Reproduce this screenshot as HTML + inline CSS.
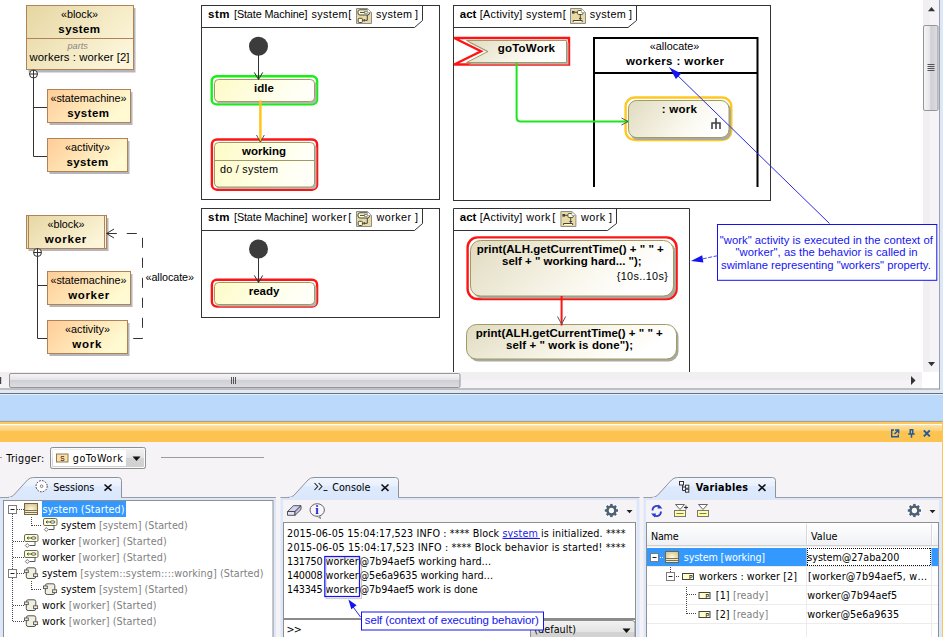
<!DOCTYPE html>
<html>
<head>
<meta charset="utf-8">
<title>Simulation</title>
<style>
html,body{margin:0;padding:0;}
body{width:943px;height:637px;overflow:hidden;background:#fff;}
#ui{position:absolute;left:0;top:0;width:943px;height:637px;display:block;}
#ui text{font-family:"Liberation Sans",sans-serif;font-size:10.8px;fill:#000;white-space:pre;}
#ui .b{font-weight:bold;font-size:11.5px;}
#ui .m{text-anchor:middle;}
#ui .t text{font-family:"DejaVu Sans Condensed","DejaVu Sans","Liberation Sans",sans-serif;font-size:10.7px;}
#ui .g{fill:#808080;}
</style>
</head>
<body>
<svg id="ui" width="943" height="637" viewBox="0 0 943 637">
<defs>
<linearGradient id="gBlock" x1="0" y1="0" x2="1" y2="0.6">
<stop offset="0" stop-color="#e6d6a2"/><stop offset="1" stop-color="#fcf5d9"/>
</linearGradient>
<linearGradient id="gBeh" x1="0" y1="0" x2="1" y2="0.4">
<stop offset="0" stop-color="#ffcc96"/><stop offset="1" stop-color="#fffad2"/>
</linearGradient>
<linearGradient id="gState" x1="0" y1="0" x2="1" y2="0.2">
<stop offset="0" stop-color="#fdfbc6"/><stop offset="0.8" stop-color="#fffff0"/><stop offset="1" stop-color="#fffff8"/>
</linearGradient>
<linearGradient id="gAct" x1="0" y1="0" x2="1" y2="0.3">
<stop offset="0" stop-color="#e0dbc0"/><stop offset="0.7" stop-color="#faf8ee"/><stop offset="1" stop-color="#ffffff"/>
</linearGradient>
<linearGradient id="gThumbH" x1="0" y1="0" x2="0" y2="1">
<stop offset="0" stop-color="#f7f5f7"/><stop offset="0.42" stop-color="#e6e5e8"/><stop offset="0.5" stop-color="#cfcfd6"/><stop offset="1" stop-color="#dddde3"/>
</linearGradient>
<linearGradient id="gThumbV" x1="0" y1="0" x2="1" y2="0">
<stop offset="0" stop-color="#f7f5f7"/><stop offset="0.42" stop-color="#e6e5e8"/><stop offset="0.5" stop-color="#cfcfd6"/><stop offset="1" stop-color="#dddde3"/>
</linearGradient>
<g id="icoStm">
<path d="M0.5 0.5H11.5L15.5 4.5V15.5H0.5Z" fill="#e9d9a2" stroke="#8e8e8e"/>
<rect x="2" y="1.8" width="11.5" height="5.2" rx="2" fill="#ffffd0" stroke="#444" stroke-width="1"/>
<path d="M4 4.4H8.5" stroke="#444" stroke-width="1" fill="none"/>
<rect x="8.3" y="3.7" width="3" height="1.5" fill="#fff" stroke="#444" stroke-width="0.6"/>
<path d="M11.3 7V12.3H8" stroke="#444" stroke-width="1" fill="none"/>
<rect x="2.2" y="10.3" width="4.2" height="4.2" rx="1" fill="#ffffd0" stroke="#444" stroke-width="1"/>
<path d="M6.4 12.3H9M8.2 11V13.6" stroke="#444" stroke-width="0.9" fill="none"/>
<path d="M11.5 0.5V4.5H15.5Z" fill="#fff" stroke="#9a9a9a" stroke-width="0.7"/>
</g>
<g id="icoAct">
<path d="M0.5 0.5H11.5L15.5 4.5V15.5H0.5Z" fill="#e9d9a2" stroke="#8e8e8e"/>
<rect x="2" y="3" width="2.6" height="2.6" fill="#444"/>
<path d="M4.6 4.3H7.5" stroke="#444" stroke-width="1" fill="none"/>
<rect x="7.5" y="2.5" width="5.5" height="4" rx="1.2" fill="#ffffd0" stroke="#444" stroke-width="0.9"/>
<path d="M10.3 6.5V12.5M9 10.5H11.6" stroke="#444" stroke-width="1" fill="none"/>
<path d="M3.2 14V12.5H12.2V14" stroke="#444" stroke-width="1" fill="#ffffd0"/>
<path d="M11.5 0.5V4.5H15.5Z" fill="#fff" stroke="#9a9a9a" stroke-width="0.7"/>
</g>
<linearGradient id="gOrange" x1="0" y1="0" x2="0" y2="1">
<stop offset="0" stop-color="#fee29f"/><stop offset="0.85" stop-color="#fdd17c"/><stop offset="1" stop-color="#fdc558"/>
</linearGradient>
<linearGradient id="gBtn" x1="0" y1="0" x2="0" y2="1">
<stop offset="0" stop-color="#f2f2f2"/><stop offset="0.5" stop-color="#e4e4e4"/><stop offset="0.51" stop-color="#d4d4d4"/><stop offset="1" stop-color="#cfcfcf"/>
</linearGradient>
<linearGradient id="gTab" x1="0" y1="0" x2="0" y2="1">
<stop offset="0" stop-color="#f1f6fe"/><stop offset="0.42" stop-color="#e9f1fd"/><stop offset="0.46" stop-color="#dde9fc"/><stop offset="1" stop-color="#dbe7fb"/>
</linearGradient>
<linearGradient id="gHdr" x1="0" y1="0" x2="0" y2="1">
<stop offset="0" stop-color="#ffffff"/><stop offset="0.5" stop-color="#f7f8fa"/><stop offset="1" stop-color="#eef0f4"/>
</linearGradient>
<radialGradient id="gBlkI" cx="0.5" cy="0.55" r="0.6">
<stop offset="0" stop-color="#fffbe8"/><stop offset="1" stop-color="#d9c68c"/>
</radialGradient>
<g id="icoBlk">
<rect x="0.5" y="0.5" width="13" height="11" fill="url(#gBlkI)" stroke="#6f6648"/>
<path d="M0.5 7.5H13.5M0.5 9.5H13.5" stroke="#7f7250" fill="none"/>
<path d="M1 8.5H13M1 10.5H13" stroke="#f3e9c4" fill="none"/>
</g>
<g id="icoStmS">
<path d="M11 8V11.5H5.5" stroke="#555" fill="none"/>
<path d="M3.3 9.5L5.3 11.5L3.3 13.5L1.3 11.5Z" fill="#fff" stroke="#555" stroke-width="0.8"/>
<rect x="0.5" y="0.5" width="13.5" height="7" rx="1.4" fill="#ffffc8" stroke="#666"/>
<path d="M3 4H7M4.5 2.7L3 4L4.5 5.3" stroke="#444" fill="none" stroke-width="0.9"/>
<ellipse cx="9.6" cy="4" rx="2.4" ry="1.2" fill="#fff" stroke="#444" stroke-width="0.9"/>
</g>
<g id="icoActS">
<rect x="2.3" y="1.8" width="9.5" height="10.7" rx="1.8" fill="#f1efdf" stroke="#555"/>
<rect x="0.5" y="4" width="3.8" height="2.6" fill="#f1efdf" stroke="#555" stroke-width="0.9"/>
<rect x="9.6" y="7.8" width="4" height="2.8" fill="#f1efdf" stroke="#555" stroke-width="0.9"/>
</g>
<g id="icoProp">
<rect x="0.5" y="0.5" width="11" height="6" fill="#ffffcc" stroke="#444"/>
<text x="7" y="5.7" style="font-size:5.5px;font-family:'Liberation Sans',sans-serif;font-weight:bold;fill:#333">P</text>
</g>
<g id="icoGear"><circle r="7.3" fill="#fff" opacity="0.55"/><g fill="#4c6272"><rect x="-1.25" y="-6.6" width="2.5" height="2.4" transform="rotate(0)"/><rect x="-1.25" y="-6.6" width="2.5" height="2.4" transform="rotate(45)"/><rect x="-1.25" y="-6.6" width="2.5" height="2.4" transform="rotate(90)"/><rect x="-1.25" y="-6.6" width="2.5" height="2.4" transform="rotate(135)"/><rect x="-1.25" y="-6.6" width="2.5" height="2.4" transform="rotate(180)"/><rect x="-1.25" y="-6.6" width="2.5" height="2.4" transform="rotate(225)"/><rect x="-1.25" y="-6.6" width="2.5" height="2.4" transform="rotate(270)"/><rect x="-1.25" y="-6.6" width="2.5" height="2.4" transform="rotate(315)"/></g><circle r="3.9" fill="none" stroke="#4c6272" stroke-width="2.5"/></g>
</defs>
<rect x="0" y="0" width="943" height="637" fill="#ffffff"/>
<!-- ===== left containment tree ===== -->
<g id="tree" stroke-width="1">
<rect x="28.5" y="8" width="107" height="64.5" fill="#b6b6ba"/>
<rect x="26.5" y="5.5" width="107" height="64" fill="url(#gBlock)" stroke="#b08258"/>
<line x1="26.5" y1="38.5" x2="133.5" y2="38.5" stroke="#b08258"/>
<text class="m" x="79.5" y="17.5">«block»</text>
<text class="m b" x="79.2" y="33" textLength="41.7">system</text>
<text class="m" x="77.7" y="49" style="font-style:italic;font-size:9.2px;fill:#8a8480">parts</text>
<text class="m" x="79.5" y="60.5" textLength="100" style="font-size:11.3px">workers : worker [2]</text>
<circle cx="33.5" cy="74" r="4" fill="#fff" stroke="#333"/>
<path d="M33.5 70V78M29.5 74H37.5" stroke="#333" fill="none"/>
<path d="M33.5 78V156.5H47M33.5 107.5H47" stroke="#333" fill="none"/>

<rect x="49.5" y="92" width="83" height="33" fill="#b6b6ba"/>
<rect x="47.5" y="89.5" width="83" height="33" fill="url(#gBeh)" stroke="#b08258"/>
<text class="m" x="88.5" y="101.5">«statemachine»</text>
<text class="m b" x="88.1" y="117" textLength="41.7">system</text>

<rect x="49.5" y="141" width="80" height="33" fill="#b6b6ba"/>
<rect x="47.5" y="138.5" width="80" height="33" fill="url(#gBeh)" stroke="#b08258"/>
<text class="m" x="87.5" y="150.5">«activity»</text>
<text class="m b" x="87.3" y="166" textLength="41.7">system</text>

<rect x="28.5" y="218" width="80" height="33" fill="#b6b6ba"/>
<rect x="26.5" y="215.5" width="80" height="33" fill="url(#gBlock)" stroke="#b08258"/>
<path d="M28.5 215.5V248.5M104.5 215.5V248.5" stroke="#b08258" fill="none"/>
<text class="m" x="66" y="227.5">«block»</text>
<text class="m b" x="65.6" y="243" textLength="41.5">worker</text>
<circle cx="37.5" cy="252.5" r="4" fill="#fff" stroke="#333"/>
<path d="M37.5 248.5V256.5M33.5 252.5H41.5" stroke="#333" fill="none"/>
<path d="M37.5 256.5V338.5H47M37.5 285.5H47" stroke="#333" fill="none"/>

<rect x="49.5" y="274" width="83" height="33" fill="#b6b6ba"/>
<rect x="47.5" y="271.5" width="83" height="33" fill="url(#gBeh)" stroke="#b08258"/>
<text class="m" x="88.5" y="283.5">«statemachine»</text>
<text class="m b" x="88.7" y="298.5" textLength="41">worker</text>

<rect x="49.5" y="323" width="80" height="33" fill="#b6b6ba"/>
<rect x="47.5" y="320.5" width="80" height="33" fill="url(#gBeh)" stroke="#b08258"/>
<text class="m" x="87.5" y="332.5">«activity»</text>
<text class="m b" x="86.8" y="347.5" textLength="29">work</text>

<path d="M114 229L106.5 233.5L114 238" stroke="#333" fill="none"/>
<path d="M133.2 338.5H142.5V233.5H106.5" stroke="#333" fill="none" stroke-dasharray="10 10"/>
<text x="145.5" y="280.5" textLength="48.5">«allocate»</text>
</g>
<!-- ===== stm system frame ===== -->
<g id="stm1">
<rect x="201.5" y="5.5" width="238" height="194" fill="#fff" stroke="#333"/>
<path d="M201.5 27.5H414.5L422.5 20.5V5.5" fill="none" stroke="#333"/>
<text class="b" x="208" y="17.5" textLength="21.5">stm</text>
<text x="234" y="17.5" textLength="73.5">[State Machine]</text>
<text x="311.5" y="17.5" textLength="36">system</text>
<text x="348.3" y="17.5">[</text>
<use href="#icoStm" x="356" y="8"/>
<text x="376" y="17.5" textLength="36">system</text>
<text x="415" y="17.5">]</text>

<circle cx="258.5" cy="46.3" r="9.5" fill="#3c3c3c"/>
<rect x="211.7" y="76.2" width="105.4" height="28.2" rx="5" fill="none" stroke="#14f014" stroke-width="2.4"/>
<rect x="216" y="81.5" width="100.5" height="22" rx="4" fill="#b4b4b4"/>
<rect x="214.5" y="79.5" width="100" height="22" rx="4" fill="url(#gState)" stroke="#a09a64"/>
<path d="M258.5 55V79.5M254.3 72.4L258.5 79.5L262.7 72.4" stroke="#333" fill="none"/>
<text class="m b" x="264" y="92">idle</text>

<rect x="211.9" y="139.5" width="105.2" height="50.2" rx="5" fill="none" stroke="#ff1414" stroke-width="2.4"/>
<rect x="216" y="144.5" width="100.5" height="44.5" rx="4" fill="#b4b4b4"/>
<rect x="214.5" y="142.5" width="100" height="44.5" rx="4" fill="url(#gState)" stroke="#a09a64"/>
<path d="M260.4 100.5V142" stroke="#ffc414" stroke-width="2.4" fill="none"/>
<path d="M256.5 135L260.4 142L264.3 135" stroke="#555" fill="none"/>
<line x1="214.5" y1="160.5" x2="314.5" y2="160.5" stroke="#a09a64"/>
<text class="m b" x="264" y="154.8">working</text>
<text x="219.9" y="172.5" textLength="58">do / system</text>
</g>
<!-- ===== stm worker frame ===== -->
<g id="stm2">
<rect x="201.5" y="208.5" width="238" height="109" fill="#fff" stroke="#333"/>
<path d="M201.5 230.5H414.5L422.5 223.5V208.5" fill="none" stroke="#333"/>
<text class="b" x="208" y="220.5" textLength="21.5">stm</text>
<text x="234" y="220.5" textLength="73.5">[State Machine]</text>
<text x="312" y="220.5" textLength="34.5">worker</text>
<text x="348.3" y="220.5">[</text>
<use href="#icoStm" x="356" y="211"/>
<text x="376.5" y="220.5" textLength="34.5">worker</text>
<text x="415" y="220.5">]</text>
<circle cx="258.5" cy="249" r="9.5" fill="#3c3c3c"/>
<rect x="211.9" y="279.7" width="105.2" height="26.9" rx="5" fill="none" stroke="#ff1414" stroke-width="2.4"/>
<rect x="216" y="284.5" width="100.5" height="22" rx="4" fill="#b4b4b4"/>
<rect x="214.5" y="282.5" width="100" height="22" rx="4" fill="url(#gState)" stroke="#a09a64"/>
<path d="M258.5 258V282.5M254.3 275.4L258.5 282.5L262.7 275.4" stroke="#333" fill="none"/>
<text class="m b" x="264" y="295">ready</text>
</g>
<!-- ===== act system frame ===== -->
<g id="act1">
<rect x="453.5" y="5.5" width="317" height="195" fill="#fff" stroke="#333"/>
<path d="M453.5 27.5H628L636.5 20.5V5.5" fill="none" stroke="#333"/>
<text class="b" x="459.8" y="17.5" textLength="16.5">act</text>
<text x="479.8" y="17.5" textLength="42.5">[Activity]</text>
<text x="525.9" y="17.5" textLength="36">system</text>
<text x="562.8" y="17.5">[</text>
<use href="#icoAct" x="570" y="8"/>
<text x="589.8" y="17.5" textLength="36">system</text>
<text x="629" y="17.5">]</text>

<!-- swimlane -->
<path d="M594 187V38H757.5V187M594 73H757.5" fill="none" stroke="#000" stroke-width="2"/>
<text class="m" x="674.5" y="49.5" textLength="49.5">«allocate»</text>
<text class="m b" x="675" y="64.5" textLength="98">workers : worker</text>

<!-- goToWork -->
<path d="M454.2 38H569V64.5H454.2L481 51.3Z" fill="none" stroke="#ff1414" stroke-width="2.4" stroke-linejoin="miter"/>
<path d="M468.5 42.5H568.5V64.5H468.5L490 53.5Z" fill="#b4b4b4"/>
<path d="M466.5 40.5H566.5V62.5H466.5L488 51.5Z" fill="url(#gAct)" stroke="#a09a64"/>
<text class="b" x="497.7" y="52.3" textLength="57.3">goToWork</text>


<!-- : work -->
<rect x="625.6" y="97.5" width="105.7" height="42.5" rx="9" fill="none" stroke="#ffc81e" stroke-width="2.4"/>
<rect x="630" y="102.5" width="101" height="37.5" rx="8" fill="#aaa9a0"/>
<rect x="628.5" y="100.5" width="100.5" height="37" rx="8" fill="url(#gAct)" stroke="#a09a64"/>
<text class="b" x="661.8" y="112.7" textLength="35">: work</text>
<path d="M716 118V129M712 129V123H720V129" fill="none" stroke="#444" stroke-width="1.6"/>
<!-- green flow -->
<path d="M516.6 63V117.5Q516.6 121.5 520.6 121.5H629" fill="none" stroke="#1ee61e" stroke-width="2"/>
<path d="M621.5 118L628 121.5L621.5 125" fill="none" stroke="#555"/>
</g>

<!-- ===== act work frame ===== -->
<g id="act2">
<path d="M453.5 372V208.5H689.5V372" fill="#fff" stroke="#333"/>
<path d="M453.5 230.5H607.5L616.5 223.5V208.5" fill="none" stroke="#333"/>
<text class="b" x="459.8" y="220.8" textLength="16.5">act</text>
<text x="479.8" y="220.8" textLength="42.5">[Activity]</text>
<text x="526.3" y="220.8" textLength="24">work</text>
<text x="552.3" y="220.8">[</text>
<use href="#icoAct" x="560.4" y="211"/>
<text x="580.9" y="220.8" textLength="24.3">work</text>
<text x="609" y="220.8">]</text>

<rect x="467.6" y="237.4" width="209" height="61.6" rx="10" fill="none" stroke="#ff1414" stroke-width="2.4"/>
<rect x="472.5" y="242.5" width="203.5" height="56" rx="10" fill="#aaa9a0"/>
<rect x="470.5" y="240.5" width="203" height="55.5" rx="10" fill="url(#gAct)" stroke="#a09a64"/>
<text class="b" x="476.8" y="253" textLength="187">print(ALH.getCurrentTime() + " " +</text>
<text class="b" x="502" y="265" textLength="139.7">self + " working hard... ");</text>
<text x="616.8" y="280" textLength="51">{10s..10s}</text>


<rect x="468.5" y="326.5" width="210" height="35" rx="10" fill="#aaa9a0"/>
<rect x="466.5" y="324.5" width="210" height="34.5" rx="10" fill="url(#gAct)" stroke="#a09a64"/>
<path d="M561.6 296V325.5" fill="none" stroke="#ff1414" stroke-width="2"/>
<path d="M557.5 316.5L561.6 324L565.7 316.5" fill="none" stroke="#555"/>
<text class="b" x="475.8" y="337" textLength="187">print(ALH.getCurrentTime() + " " +</text>
<text class="b" x="506" y="348.9" textLength="127">self + " work is done");</text>
</g>

<!-- ===== scrollbars ===== -->
<g id="scroll">
<rect x="923" y="0" width="16" height="372" fill="#f1eff1"/>
<rect x="930" y="0" width="9" height="372" fill="#f5f3f5"/>
<path d="M928 11.2L931.5 7L935 11.2Z" fill="#333"/>
<rect x="923.5" y="25.5" width="14.5" height="85" rx="1.5" fill="url(#gThumbV)" stroke="#969696"/>
<path d="M927.5 64.5H934.5M927.5 66.5H934.5M927.5 68.5H934.5M927.5 70.5H934.5" stroke="#555" fill="none"/>
<path d="M928 362L931.5 366.2L935 362Z" fill="#333"/>
<rect x="0" y="372" width="922" height="17" fill="#f1eff1"/>
<rect x="0" y="380" width="922" height="9" fill="#f5f3f5"/>
<rect x="922" y="372" width="17.5" height="17" fill="#fff"/>
<rect x="9.5" y="373.5" width="450.5" height="14" rx="1.5" fill="url(#gThumbH)" stroke="#969696"/>
<path d="M231.5 377V384M233.5 377V384M235.5 377V384" stroke="#555" fill="none"/>
<rect x="0" y="377" width="1.2" height="7" fill="#444"/>
<path d="M911 376L915.5 380.5L911 385Z" fill="#333"/>
<rect x="940" y="0" width="3" height="394" fill="#dce8f8"/>
<rect x="0" y="389.5" width="943" height="4" fill="#dfe9f7"/>
<path d="M939.5 0V389" stroke="#98a2b2" fill="none"/>
<path d="M0 389H940" stroke="#8c8c8c" fill="none"/>
<path d="M0 393.5H943" stroke="#6e6e6e" fill="none"/>
</g>
<!-- ===== note ===== -->
<g id="note">
<path d="M829.5 223.5L669.4 67.5" stroke="#2a2ae6" stroke-width="1" fill="none"/>
<path d="M669.4 67.5L681.2 73.6L675.9 79Z" fill="#1414f0"/>
<rect x="717.5" y="224.5" width="219.3" height="55.8" fill="#fff" stroke="#1414f0"/>
<text x="719.8" y="243.9" textLength="213" style="fill:#1414f0;font-size:11.25px">"work" activity is executed in the context of</text>
<text x="735.5" y="256.1" textLength="182" style="fill:#1414f0;font-size:11.25px">"worker", as the behavior is called in</text>
<text x="721.1" y="268.8" textLength="209.7" style="fill:#1414f0;font-size:11.25px">swimlane representing "workers" property.</text>
<path d="M717.5 255.7L702.5 258.9" stroke="#4a4aec" fill="none" stroke-dasharray="4 1.5"/>
<path d="M691 261L702.2 255.2L703.4 262.6Z" fill="#1414f0"/>
</g>
<!-- ===== bottom strip & title bar ===== -->
<g id="strip">
<rect x="0" y="394" width="943" height="28" fill="#bbd9fb"/>
<rect x="0" y="394" width="943" height="1" fill="#e6f0fd"/>
<rect x="0" y="442" width="943" height="195" fill="#f6f3f6"/>
<rect x="0" y="421" width="943" height="21" fill="#fdc350"/>
<rect x="0" y="421.7" width="943" height="2.5" fill="#fdc75e"/>
<rect x="0" y="425" width="943" height="6.3" fill="url(#gOrange)"/>
<rect x="0" y="424" width="943" height="1.1" fill="#ffffff"/>
<rect x="0" y="420.9" width="943" height="0.9" fill="#8f98aa"/>
<g stroke="#1d5b9a" fill="none" stroke-width="1.4">
<path d="M894 430H891.7V436.7H898.3V434.5"/>
<path d="M894.5 434L898.3 430.2M895 429.9H898.6V433.5" stroke-width="1.5"/>
<path d="M909.5 429.7H913.5M910.3 430V433.5M912.7 430V433.5M908.3 434H914.7M911.5 434.5V437.8" stroke-width="1.5"/>
<path d="M923.8 430.3L929.8 436.3M929.8 430.3L923.8 436.3" stroke-width="1.9"/>
</g>
</g>
<!-- ===== trigger row ===== -->
<g id="trigger" class="t">
<path d="M0 457.5H2" stroke="#9a9a9a"/>
<text x="6.3" y="461.7" textLength="38">Trigger:</text>
<rect x="50.5" y="447.5" width="95" height="21" rx="1.8" fill="url(#gBtn)" stroke="#8e8f8f"/>
<rect x="51.5" y="448.5" width="93" height="19" rx="1.5" fill="none" stroke="#fafafa"/>
<rect x="53" y="450" width="73" height="16" fill="#fff"/>
<path d="M132.5 456.5H140.5L136.5 461Z" fill="#111"/>
<rect x="56.5" y="454" width="11.5" height="8" fill="#ffdfa6" stroke="#8b7b55"/>
<text x="60.3" y="460.8" style="font-size:6.5px;font-family:'Liberation Sans',sans-serif">S</text>
<text x="72.8" y="461.7" textLength="50">goToWork</text>
<path d="M161 457.5H264" stroke="#9c9c9c"/>
</g>
<!-- ===== Sessions panel ===== -->
<g id="sessions" class="t">
<rect x="0" y="497" width="276" height="140" fill="#dce8fa"/>
<path d="M0 497.5H276" fill="none" stroke="#9a9da3"/>
<path d="M7.5 497.5Q11.5 497.5 13.5 495.3L27.5 480Q29.8 477.5 33.5 477.5H118.5Q121.5 477.5 121.5 480.5V497.5" fill="url(#gTab)" stroke="#8f9399"/>
<path d="M9 497.5H121" stroke="#dbe8fb"/>
<circle cx="41.6" cy="486.2" r="5.6" fill="#fff" stroke="#333" stroke-dasharray="1.6 1.3"/>
<circle cx="41.6" cy="486.2" r="1.3" fill="none" stroke="#666" stroke-width="0.8"/>
<text x="53.3" y="490.6" textLength="41">Sessions</text>
<path d="M104.5 484.5L111.5 490.7M111.5 484.5L104.5 490.7" stroke="#111" stroke-width="1.6" fill="none"/>

<rect x="3.5" y="500.5" width="269.5" height="140" fill="#fff" stroke="#8e8f8f"/>
<rect x="42" y="501" width="84" height="16" fill="#3399ff"/>
<!-- tree lines -->
<g stroke="#444" stroke-dasharray="1 1" fill="none">
<path d="M12.5 514V570M12.5 578V622"/>
<path d="M17 509.5H24"/>
<path d="M31.5 517V526M32 525.5H42"/>
<path d="M13 541.5H24M13 557.5H24M17 573.5H24M13 605.5H24M13 621.5H24"/>
<path d="M31.5 581V590M32 589.5H42"/>
</g>
<g fill="#fff" stroke="#7c7c7c">
<rect x="8.5" y="505.5" width="8" height="8"/>
<rect x="8.5" y="569.5" width="8" height="8"/>
</g>
<path d="M10.5 509.5H14.5M10.5 573.5H14.5" stroke="#222"/>
<use href="#icoBlk" x="24" y="503"/>
<use href="#icoStmS" x="43" y="518"/>
<use href="#icoStmS" x="24" y="534"/>
<use href="#icoStmS" x="24" y="550"/>
<use href="#icoActS" x="24" y="566"/>
<use href="#icoActS" x="43" y="582"/>
<use href="#icoActS" x="24" y="598"/>
<use href="#icoActS" x="24" y="614"/>
<text x="42.5" y="512.5" textLength="82" fill="#fff" style="fill:#fff">system (Started)</text>
<text x="61" y="528.5" textLength="126.7">system <tspan class="g">[system] (Started)</tspan></text>
<text x="41.9" y="544.5" textLength="124.8">worker <tspan class="g">[worker] (Started)</tspan></text>
<text x="41.9" y="560.5" textLength="124.8">worker <tspan class="g">[worker] (Started)</tspan></text>
<text x="41.9" y="576.5" textLength="221.6">system <tspan class="g">[system::system::::working] (Started)</tspan></text>
<text x="61" y="592.5" textLength="126.7">system <tspan class="g">[system] (Started)</tspan></text>
<text x="41.9" y="608.5" textLength="114.5">work <tspan class="g">[worker] (Started)</tspan></text>
<text x="41.9" y="624.5" textLength="114.5">work <tspan class="g">[worker] (Started)</tspan></text>
</g>
<!-- ===== Console panel ===== -->
<g id="console" class="t">
<rect x="280.5" y="497" width="359" height="140" fill="#dce8fa"/>
<rect x="283" y="500" width="353.5" height="137" fill="#f6f3f6"/>
<path d="M280.5 497.5H639.5" fill="none" stroke="#9a9da3"/>
<path d="M288 497.5Q292 497.5 294 495.3L308 480Q310.3 477.5 314 477.5H395.5Q398.5 477.5 398.5 480.5V497.5" fill="url(#gTab)" stroke="#8f9399"/>
<path d="M289.5 497.5H398" stroke="#dbe8fb"/>
<path d="M314.5 483L317.7 486.5L314.5 490M318.7 483L321.9 486.5L318.7 490M323.5 490.5H327.5" stroke="#222" fill="none" stroke-width="1.1"/>
<text x="332.3" y="490.6" textLength="38">Console</text>
<path d="M381.5 484.5L388.5 490.8M388.5 484.5L381.5 490.8" stroke="#111" stroke-width="1.6" fill="none"/>
<!-- toolbar -->
<path d="M287.5 511.5L293.5 505.7H301L295 511.5Z" fill="#d2d2f3" stroke="#444" stroke-width="0.9"/>
<path d="M287.5 511.5V515.3H295V511.5Z" fill="#e2e2f9" stroke="#444" stroke-width="0.9"/>
<path d="M295 515.3L301 509.5V505.7L295 511.5Z" fill="#c2c2ea" stroke="#444" stroke-width="0.9"/>
<ellipse cx="317.2" cy="510" rx="7.2" ry="6.3" fill="#f8f6f8" stroke="#666"/>
<path d="M317 516L320.5 518.5L319.5 515.5" fill="#f8f6f8" stroke="#666" stroke-width="0.9"/>
<text x="315.2" y="514.3" style="font-family:'Liberation Serif',serif;font-weight:bold;font-size:12px;fill:#1a1ae0">i</text>
<use href="#icoGear" x="611.4" y="510.5"/>
<path d="M626.5 510H632.5L629.5 513.3Z" fill="#222"/>
<!-- text area -->
<rect x="283.5" y="522.5" width="352" height="120" fill="#fff" stroke="#8e8f8f"/>
<rect x="284" y="618" width="351" height="2" fill="#8b8b8b"/>
<text x="287.1" y="536.8" textLength="338.4">2015-06-05 15:04:17,523 INFO : **** Block <tspan style="fill:#1a1ae6;text-decoration:underline">system</tspan><tspan style="fill:#1a1ae6"> </tspan>is initialized. ****</text>
<path d="M503.8 538.5H540" stroke="#1a1ae6"/>
<text x="287.1" y="550.8" textLength="338.4">2015-06-05 15:04:17,523 INFO : **** Block behavior is started! ****</text>
<text x="287.1" y="564.8" textLength="35.5">131750</text><text x="325.5" y="564.8" textLength="33.2">worker</text><text x="359.5" y="564.8" textLength="131.7">@7b94aef5 working hard…</text>
<text x="287.1" y="578.8" textLength="35.5">140008</text><text x="325.5" y="578.8" textLength="33.2">worker</text><text x="359.5" y="578.8" textLength="133.6">@5e6a9635 working hard…</text>
<text x="287.1" y="592.8" textLength="35.5">143345</text><text x="325.5" y="592.8" textLength="33.2">worker</text><text x="359.5" y="592.8" textLength="118.2">@7b94aef5 work is done</text>
<text x="286.5" y="633.4" textLength="15.4">&gt;&gt;</text>
<!-- (default) combo -->
<rect x="530.5" y="620.5" width="104.5" height="22" rx="3" fill="url(#gBtn)" stroke="#8e8f8f"/>
<text x="534.3" y="633.2" textLength="41.7">(default)</text>
<path d="M622.5 628.5H630.5L626.5 633Z" fill="#111"/>
<!-- annotation -->
<rect x="326" y="558" width="35.5" height="40.5" fill="none" stroke="#b0b0b0" stroke-width="1.2" opacity="0.6"/>
<rect x="324.8" y="556.5" width="34.7" height="40" fill="none" stroke="#1414f0" stroke-width="1.2"/>
<path d="M360.5 617L351 604" stroke="#2a2ae6" fill="none"/>
<path d="M348.4 599.6L356.6 605.2L351.3 609.3Z" fill="#1414f0"/>
<rect x="361.5" y="612" width="182" height="18" fill="#fff" stroke="#1414f0"/>
<text x="364.8" y="623.8" textLength="174" style="font-family:'Liberation Sans',sans-serif;font-size:11.5px;fill:#1414f0">self (context of executing behavior)</text>
</g>
<!-- ===== Variables panel ===== -->
<g id="vars" class="t">
<rect x="643.5" y="497" width="300" height="140" fill="#dce8fa"/>
<rect x="646" y="500" width="293" height="137" fill="#f6f3f6"/>
<path d="M643.5 497.5H943" fill="none" stroke="#9a9da3"/>
<path d="M651.5 497.5Q655.5 497.5 657.5 495.3L671.5 480Q673.8 477.5 677.5 477.5H772.5Q775.5 477.5 775.5 480.5V497.5" fill="url(#gTab)" stroke="#8f9399"/>
<path d="M652.5 497.5H775" stroke="#dbe8fb"/>
<g fill="#fff" stroke="#333" stroke-width="1">
<path d="M682.5 485V490.5H685.5M682.5 487H685.5" fill="none"/>
<rect x="679.5" y="481.5" width="4" height="3.5"/>
<rect x="685.5" y="485.2" width="3.3" height="3"/>
<rect x="685.5" y="489.2" width="3.3" height="3"/>
</g>
<text x="695.7" y="490.6" textLength="52.2" style="font-weight:bold">Variables</text>
<path d="M758.5 484.5L765.5 490.8M765.5 484.5L758.5 490.8" stroke="#111" stroke-width="1.6" fill="none"/>
<!-- toolbar -->
<g fill="none" stroke="#2a3fd0" stroke-width="1.8">
<path d="M652.5 510.5C652.5 506 658 504.5 660.5 507.5"/>
<path d="M661 511.5C661 516 655.5 517.5 653 514.5"/>
</g>
<path d="M658.5 504.5L662.5 508.5H657.5Z M655 517.5L651 513.5H656Z" fill="#2a3fd0"/>
<g stroke="#777" fill="#ffff9c">
<rect x="674.5" y="510.5" width="11" height="6"/>
<rect x="697.5" y="510.5" width="11" height="6"/>
</g>
<path d="M676.5 513.5H683.5M699.5 513.5H706.5" stroke="#777" fill="none"/>
<path d="M675.5 504.5H684.5L680 509.5Z M698.5 504.5H707.5L703 509.5Z" fill="#fff" stroke="#666" stroke-width="1"/>
<path d="M684 507.5H688M686 505.5V509.5" stroke="#333" fill="none"/>
<use href="#icoGear" x="914.4" y="510.5"/>
<rect x="942" y="421.5" width="1" height="216" fill="#fcc556"/>
<path d="M929.5 510H935.5L932.5 513.3Z" fill="#222"/>
<!-- table -->
<rect x="646.5" y="522.5" width="292" height="120" fill="#fff" stroke="#8e8f8f"/>
<rect x="647" y="523" width="291" height="23" fill="url(#gHdr)"/>
<path d="M647 545.5H938" stroke="#d0d0d0"/>
<path d="M647 546.5H938" stroke="#f0f0f0"/>
<path d="M806.5 524V545M931.5 524V545" stroke="#d8d8d8"/>
<path d="M807.5 524V545M932.5 524V545" stroke="#ffffff"/>
<text x="651" y="539.7" textLength="27.6">Name</text>
<text x="811" y="539.7" textLength="26.5">Value</text>
<path d="M647 566.5H938M647 585.5H938M647 604.5H938M647 623.5H938M806.5 547V637M931.5 566V637" stroke="#ececec"/>
<rect x="647" y="548" width="159.5" height="18" fill="#3399ff"/>
<rect x="931.5" y="548" width="6.5" height="18" fill="#3399ff"/>
<rect x="807" y="548" width="124" height="18" fill="#fff"/>
<path d="M807 548.5H931M807 565.5H931M807.5 548V566M930.5 548V566" fill="none" stroke="#111" stroke-dasharray="1 1"/>
<!-- tree -->
<g fill="#fff" stroke="#7c7c7c">
<rect x="650.5" y="553.5" width="8" height="8"/>
<rect x="666.5" y="572.5" width="8" height="8"/>
</g>
<path d="M652.5 557.5H656.5M668.5 576.5H672.5" stroke="#222"/>
<g stroke="#444" stroke-dasharray="1 1" fill="none">
<path d="M660 557.5H664" stroke="#fff"/>
<path d="M670.5 567V572M676 576.5H680"/>
<path d="M686.5 587V614M687 613.5H697M687 594.5H697"/>
</g>
<use href="#icoBlk" x="665" y="551"/>
<use href="#icoProp" x="682" y="573"/>
<use href="#icoProp" x="698.5" y="592"/>
<use href="#icoProp" x="698.5" y="611"/>
<text x="683.8" y="560.7" textLength="81.3" style="fill:#fff">system [working]</text>
<text x="807.3" y="560.7" textLength="92">system@27aba200</text>
<text x="699.1" y="580" textLength="97.8">workers : worker [2]</text>
<text x="808" y="580" textLength="119">[worker@7b94aef5, w…</text>
<text x="715.8" y="599" textLength="52.5">[1] <tspan class="g">[ready]</tspan></text>
<text x="807.3" y="599" textLength="89.8">worker@7b94aef5</text>
<text x="715.8" y="618" textLength="52.5">[2] <tspan class="g">[ready]</tspan></text>
<text x="807.3" y="618" textLength="91.7">worker@5e6a9635</text>
</g>
</svg>
</body>
</html>
